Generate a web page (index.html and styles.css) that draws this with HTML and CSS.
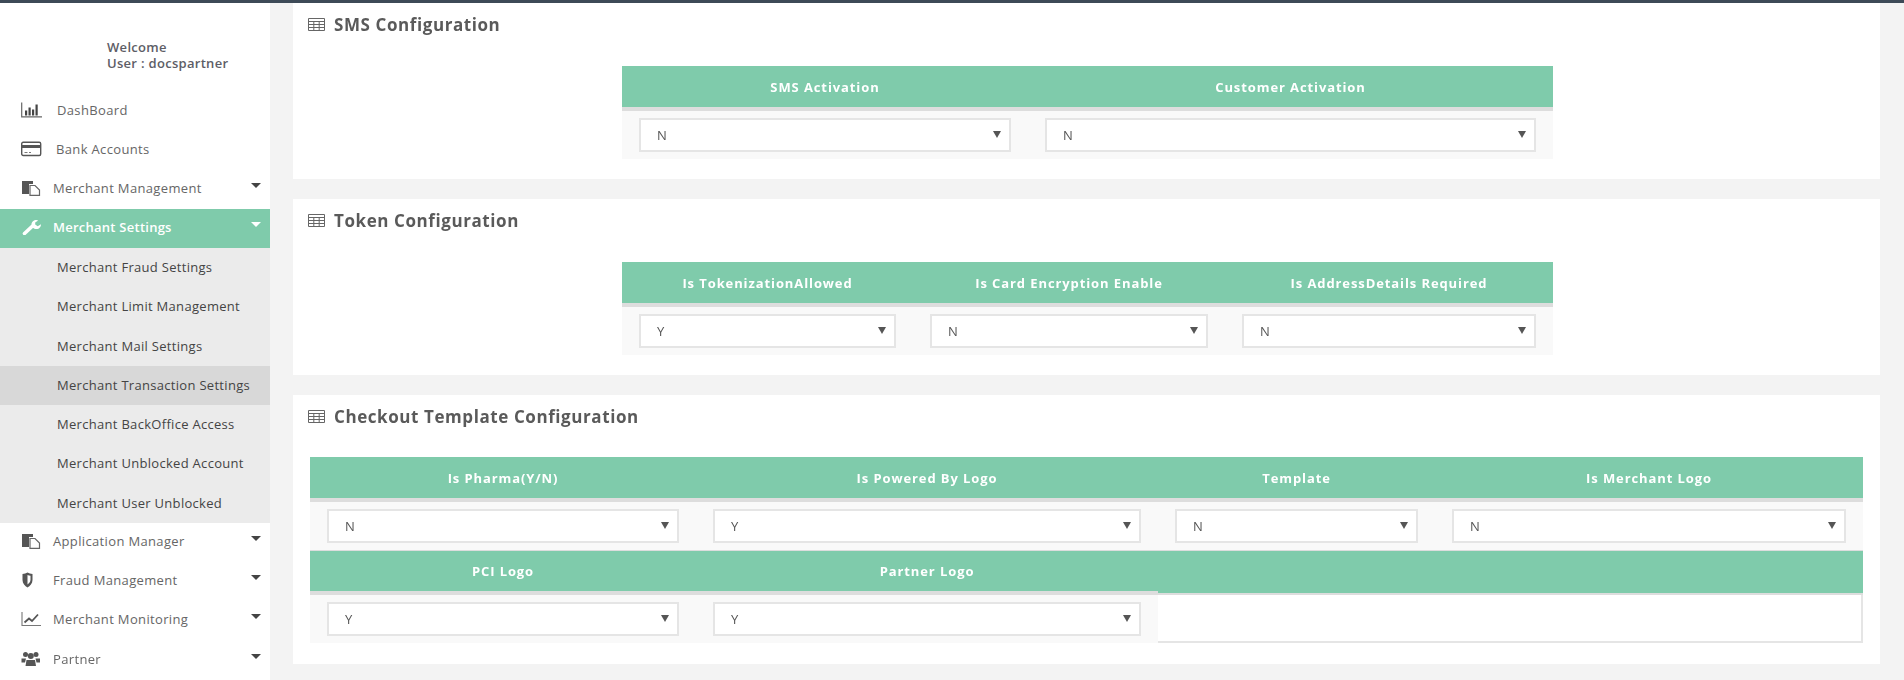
FILE: index.html
```html
<!DOCTYPE html>
<html lang="en">
<head>
<meta charset="utf-8">
<title>Merchant Transaction Settings</title>
<link rel="stylesheet" href="styles.css">
</head>
<body>
<div class="topbar"></div>
<div class="layout">
  <aside class="sidebar">
    <div class="user">Welcome<br>User : docspartner</div>
    <nav>
      <a class="nav-item gap-15"><svg class="icon" viewBox="0 0 21 15"><path d="M.7 0v14.300H21" fill="none" stroke="#666" stroke-width="1.200"/><path d="M4 8h2.200v5H4zM7.500 5h2.200v8H7.500zM11 7h2.200v6H11zM14.500 2h2.200v11h-2.200z" fill="#444"/></svg><span>DashBoard</span></a>
      <a class="nav-item gap-14"><svg class="icon" viewBox="0 0 21 15"><rect x=".7" y=".7" width="19" height="13.300" rx="1.500" fill="none" stroke="#555" stroke-width="1.400"/><path d="M1 3.500h18.500v3H1z" fill="#555"/><path d="M3.500 11h3M8 11h2" stroke="#777"/></svg><span>Bank Accounts</span></a>
      <a class="nav-item"><svg class="icon" viewBox="0 0 21 16"><path d="M1 1h11v3H8v10H1z" fill="#555"/><path d="M9 5.500h5l4.500 4.500v5.300H9z" fill="#fff" stroke="#666" stroke-width="1.200"/></svg><span>Merchant Management</span><i class="caret"></i></a>
      <a class="nav-item active"><svg class="icon" viewBox="0 0 21 16"><path d="M3.500 14.500L11 7.500" fill="none" stroke="#fff" stroke-width="3.600" stroke-linecap="round"/><path d="M15.500 1c-2.800 0-5 2-5 4.500s2.200 4.500 5 4.500 4.500-2.200 4.500-4.800l-3.300 2-2.500-1.600V3.500l3-2z" fill="#fff"/></svg><span>Merchant Settings</span><i class="caret"></i></a>
      <div class="submenu">
        <a class="sub-item">Merchant Fraud Settings</a>
        <a class="sub-item">Merchant Limit Management</a>
        <a class="sub-item">Merchant Mail Settings</a>
        <a class="sub-item current">Merchant Transaction Settings</a>
        <a class="sub-item">Merchant BackOffice Access</a>
        <a class="sub-item">Merchant Unblocked Account</a>
        <a class="sub-item">Merchant User Unblocked</a>
      </div>
      <a class="nav-item"><svg class="icon" viewBox="0 0 21 16"><path d="M1 1h11v3H8v10H1z" fill="#555"/><path d="M9 5.500h5l4.500 4.500v5.300H9z" fill="#fff" stroke="#666" stroke-width="1.200"/></svg><span>Application Manager</span><i class="caret"></i></a>
      <a class="nav-item raised"><svg class="icon" viewBox="0 0 21 16"><path d="M1.500 2c2-.3 3.500-.8 5-1.500 1.500.7 3 1.200 5 1.500v6c0 3.500-2.500 6-5 7.500-2.500-1.500-5-4-5-7.500z" fill="#555"/><path d="M6.500 3v9.500c1.500-1 3-2.500 3-4.700V3.800c-1-.1-2-.4-3-.8z" fill="#fff"/></svg><span>Fraud Management</span><i class="caret"></i></a>
      <a class="nav-item raised"><svg class="icon" viewBox="0 0 21 16"><path d="M1 1v13.500h19" fill="none" stroke="#777" stroke-width="1.100"/><path d="M3.500 11.500l4.500-4 3 2.500 6-6.500" fill="none" stroke="#555" stroke-width="1.800"/></svg><span>Merchant Monitoring</span><i class="caret"></i></a>
      <a class="nav-item"><svg class="icon" viewBox="0 0 21 16"><circle cx="4.500" cy="3.500" r="2.500" fill="#555"/><circle cx="15" cy="3.500" r="2.500" fill="#555"/><circle cx="9.800" cy="5" r="3" fill="#555"/><path d="M.5 7.500h4.500l-1 4H.5zM19 7.500h-4.500l1 4H19zM5.500 9h8.500l1 6H4.500z" fill="#555"/></svg><span>Partner</span><i class="caret"></i></a>
    </nav>
  </aside>
  <main class="content">
    <section class="panel">
      <h2 class="panel-title"><svg class="table-icon" viewBox="0 0 17 13"><path d="M.5.500h16v12H.5zM.5 3.500h16M.5 6.500h16M.5 9.500h16M5.800 3.500v9M11.200 3.500v9" fill="none" stroke="#666"/></svg>SMS Configuration</h2>
      <table class="grid narrow">
        <colgroup><col class="c406"><col></colgroup>
        <tr><th>SMS Activation</th><th>Customer Activation</th></tr>
        <tr>
          <td><div class="select-wrap"><select><option selected>N</option><option>Y</option></select></div></td>
          <td><div class="select-wrap"><select><option selected>N</option><option>Y</option></select></div></td>
        </tr>
      </table>
    </section>
    <section class="panel">
      <h2 class="panel-title"><svg class="table-icon" viewBox="0 0 17 13"><path d="M.5.500h16v12H.5zM.5 3.500h16M.5 6.500h16M.5 9.500h16M5.800 3.500v9M11.200 3.500v9" fill="none" stroke="#666"/></svg>Token Configuration</h2>
      <table class="grid narrow">
        <colgroup><col class="c291"><col class="c312"><col></colgroup>
        <tr><th>Is TokenizationAllowed</th><th>Is Card Encryption Enable</th><th>Is AddressDetails Required</th></tr>
        <tr>
          <td><div class="select-wrap"><select><option selected>Y</option><option>N</option></select></div></td>
          <td><div class="select-wrap"><select><option selected>N</option><option>Y</option></select></div></td>
          <td><div class="select-wrap"><select><option selected>N</option><option>Y</option></select></div></td>
        </tr>
      </table>
    </section>
    <section class="panel panel-wide">
      <h2 class="panel-title"><svg class="table-icon" viewBox="0 0 17 13"><path d="M.5.500h16v12H.5zM.5 3.500h16M.5 6.500h16M.5 9.500h16M5.800 3.500v9M11.200 3.500v9" fill="none" stroke="#666"/></svg>Checkout Template Configuration</h2>
      <table class="grid">
        <colgroup><col class="c386"><col class="c462"><col class="c277"><col></colgroup>
        <tr><th>Is Pharma(Y/N)</th><th>Is Powered By Logo</th><th>Template</th><th>Is Merchant Logo</th></tr>
        <tr>
          <td><div class="select-wrap"><select><option selected>N</option><option>Y</option></select></div></td>
          <td><div class="select-wrap"><select><option selected>Y</option><option>N</option></select></div></td>
          <td><div class="select-wrap"><select><option selected>N</option><option>Y</option></select></div></td>
          <td><div class="select-wrap"><select><option selected>N</option><option>Y</option></select></div></td>
        </tr>
        <tr class="second"><th>PCI Logo</th><th>Partner Logo</th><th class="blank" colspan="2"></th></tr>
        <tr>
          <td><div class="select-wrap"><select><option selected>Y</option><option>N</option></select></div></td>
          <td><div class="select-wrap"><select><option selected>Y</option><option>N</option></select></div></td>
          <td class="empty" colspan="2"></td>
        </tr>
      </table>
    </section>
  </main>
</div>
</body>
</html>
```
FILE: styles.css
```css
* { box-sizing: border-box; }
html, body { height: 100%; }
body {
  margin: 0;
  overflow: hidden;
  background: #f3f3f3;
  color: #555;
  font-family: "Open Sans", "Liberation Sans", sans-serif;
  font-size: 13px;
}
.topbar { height: 3px; background: #3d4a57; }
.layout { display: flex; height: 677px; filter: blur(.35px); }

.sidebar { width: 270px; flex: none; background: #fff; }
.user { height: 88px; padding: 36px 0 0 107px; line-height: 16px; letter-spacing: .3px; font-weight: 600; color: #5d5d66; }
.nav-item {
  display: flex;
  align-items: center;
  gap: 11px;
  height: 39.25px;
  padding: 0 9px 2px 21px;
  color: #666;
  letter-spacing: .35px;
}
.nav-item.gap-15 { gap: 15px; padding-bottom: 1px; }
.nav-item.gap-14 { gap: 14px; padding-bottom: 1px; }
.nav-item.raised { padding-bottom: 3px; }
.nav-item.active { background: #7fcbab; color: #fff; font-weight: 600; letter-spacing: .25px; }
.icon { width: 21px; height: 16px; flex: none; }
.caret {
  margin: -5px 0 0 auto;
  border-left: 5px solid transparent;
  border-right: 5px solid transparent;
  border-top: 5px solid #444;
}
.active .caret { border-top-color: #fff; }
.submenu { background: #ebebeb; }
.sub-item {
  display: flex;
  align-items: center;
  height: 39.25px;
  padding: 0 0 1px 57px;
  color: #444;
  letter-spacing: .3px;
}
.sub-item.current { background: #d8d8d8; }

.content { flex: 1; display: flex; flex-direction: column; gap: 20px; padding: 0 24px 0 23px; }
.panel { background: #fff; padding: 0 17px 20px; }
.panel-wide { padding-bottom: 21px; }
.panel-title {
  display: flex;
  align-items: center;
  gap: 9px;
  height: 43px;
  margin: 0 0 20px -2px;
  font-size: 17px;
  font-weight: 700;
  letter-spacing: .58px;
  color: #5a5a5a;
}
.panel-wide .panel-title { margin-bottom: 19px; }
.table-icon { width: 17px; height: 13px; flex: none; }

.grid { width: 100%; table-layout: fixed; border-collapse: separate; border-spacing: 0; }
.grid.narrow { width: 931px; margin-left: 312px; }
.c406 { width: 406px; }
.c291 { width: 291px; }
.c312 { width: 312px; }
.c386 { width: 386px; }
.c462 { width: 462px; }
.c277 { width: 277px; }
.grid th {
  height: 45px;
  padding: 0;
  background: #7fcbab;
  border-bottom: 4px solid #ddd;
  color: #fff;
  font-size: 13px;
  font-weight: 700;
  letter-spacing: .9px;
  text-align: center;
}
.second th { border-top: 1px solid #ddd; }
.grid th.blank { border-bottom-width: 2px; }
.grid td { height: 48px; padding: 7px 17px; background: #f9f9f9; }
.grid td.empty { background: #fff; border-right: 2px solid #e5e5e5; border-bottom: 2px solid #e5e5e5; }

.select-wrap { position: relative; }
.select-wrap::after {
  content: "";
  position: absolute;
  top: 13px;
  right: 10px;
  border-left: 4px solid transparent;
  border-right: 4px solid transparent;
  border-top: 7px solid #555;
  pointer-events: none;
}
.select-wrap select {
  display: block;
  width: 100%;
  height: 34px;
  padding: 0 0 0 16px;
  border: 2px solid #e5e5e5;
  border-radius: 0;
  background: #fff;
  color: #555;
  font: inherit;
  appearance: none;
}
```
